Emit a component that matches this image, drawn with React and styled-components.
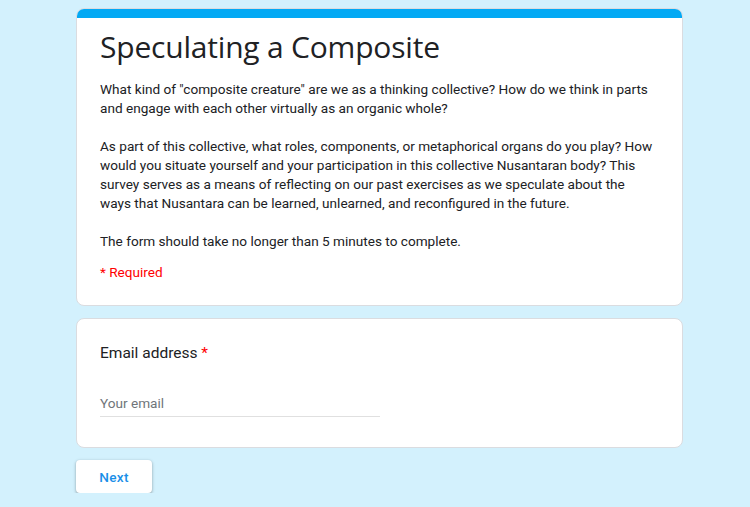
import React from "react";
import styled, { createGlobalStyle } from "styled-components";

const GlobalStyle = createGlobalStyle`
  html, body {
    margin: 0;
    padding: 0;
    background: #d3f1fd;
    font-family: Roboto, "Liberation Sans", Arial, sans-serif;
  }
`;

const Page = styled.div`
  width: 607px;
  margin-left: 76px;
  padding-top: 8px;
  display: flex;
  flex-direction: column;
  gap: 12px;
`;

const Card = styled.div`
  background: #fff;
  border: 1px solid #dadce0;
  border-radius: 8px;
  overflow: hidden;
`;

const TopBar = styled.div`
  height: 10px;
  background: #03a9f4;
  margin: -1px -1px 0;
`;

const Body = styled.div`
  padding: ${props => props.pad || "24px 23px"};
`;

const Title = styled.h1`
  margin: 0 0 12px;
  font-family: "Open Sans", Roboto, sans-serif;
  font-weight: 400;
  font-size: 30px;
  line-height: 42px;
  color: #202124;
  letter-spacing: -0.2px;
`;

const Description = styled.div`
  font-size: 13.6px;
  line-height: 19px;
  color: #202124;
  white-space: pre-wrap;
`;

const Required = styled.div`
  margin-top: 12px;
  font-size: 13.6px;
  line-height: 19px;
  color: #f00;
`;

const Question = styled.div`
  font-size: 15.5px;
  line-height: 24px;
  color: #202124;
`;

const Star = styled.span`
  color: #f00;
`;

const Input = styled.div`
  margin-top: 28px;
  width: 280px;
  padding-bottom: 3px;
  border-bottom: 1px solid #e0e0e0;
  font-size: 13.6px;
  line-height: 20px;
  color: #70757a;
`;

const NextButton = styled.button`
  align-self: flex-start;
  width: 76px;
  height: 33px;
  border: none;
  border-radius: 4px;
  background: #fff;
  box-shadow: 0 1px 2px rgba(60, 64, 67, 0.3), 0 1px 3px 1px rgba(60, 64, 67, 0.15);
  color: #1a8fe8;
  font-family: Roboto, sans-serif;
  font-weight: 500;
  font-size: 13.6px;
  letter-spacing: 0.3px;
`;

const description = `What kind of "composite creature" are we as a thinking collective? How do we think in parts and engage with each other virtually as an organic whole?

As part of this collective, what roles, components, or metaphorical organs do you play? How would you situate yourself and your participation in this collective Nusantaran body? This survey serves as a means of reflecting on our past exercises as we speculate about the ways that Nusantara can be learned, unlearned, and reconfigured in the future.

The form should take no longer than 5 minutes to complete.`;

function App() {
  return (
    <Page>
      <GlobalStyle />
      <Card>
        <TopBar />
        <Body pad="8px 23px 23px">
          <Title>Speculating a Composite</Title>
          <Description>{description}</Description>
          <Required>* Required</Required>
        </Body>
      </Card>
      <Card>
        <Body pad="22px 23px 30px">
          <Question>
            Email address <Star>*</Star>
          </Question>
          <Input>Your email</Input>
        </Body>
      </Card>
      <NextButton>Next</NextButton>
    </Page>
  );
}

export default App;
